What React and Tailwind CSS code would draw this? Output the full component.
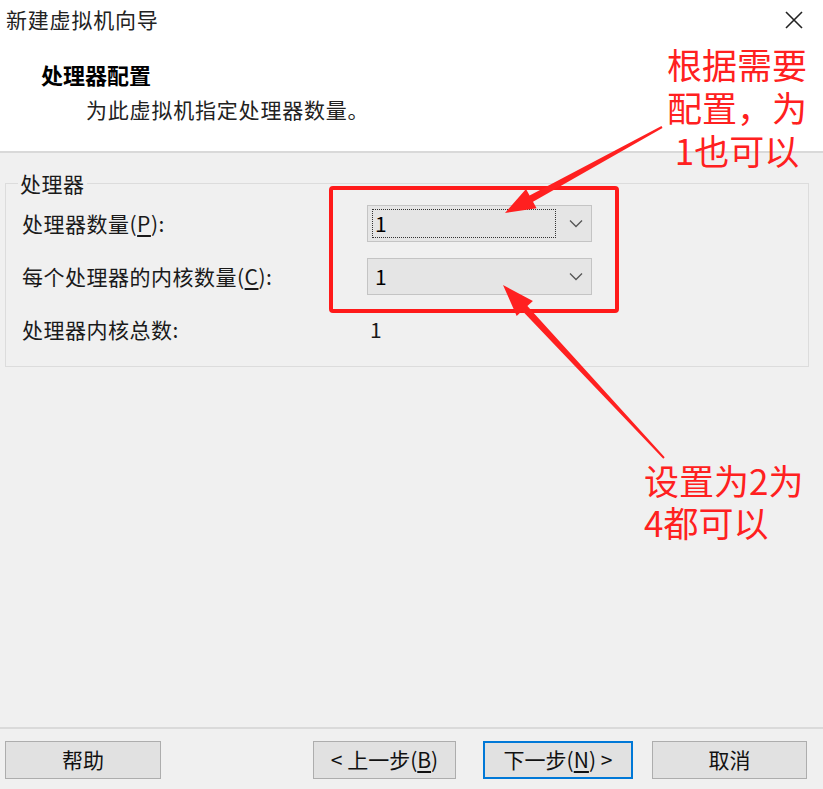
import React from 'react';

const font = { fontFamily: '"Noto Sans CJK SC", "Liberation Sans", sans-serif' };

function arrowPoints(x1, y1, x2, y2, tailW, shaftW, headLen, headW) {
  const dx = x2 - x1;
  const dy = y2 - y1;
  const len = Math.hypot(dx, dy);
  const ux = dx / len;
  const uy = dy / len;
  const nx = -uy;
  const ny = ux;
  const bx = x2 - ux * headLen;
  const by = y2 - uy * headLen;
  const pts = [
    [x1 + nx * tailW / 2, y1 + ny * tailW / 2],
    [bx + nx * shaftW / 2, by + ny * shaftW / 2],
    [bx + nx * headW / 2, by + ny * headW / 2],
    [x2, y2],
    [bx - nx * headW / 2, by - ny * headW / 2],
    [bx - nx * shaftW / 2, by - ny * shaftW / 2],
    [x1 - nx * tailW / 2, y1 - ny * tailW / 2],
  ];
  return pts.map((p) => p[0].toFixed(1) + ',' + p[1].toFixed(1)).join(' ');
}

function Chevron() {
  return (
    <svg width="14" height="9" viewBox="0 0 14 9" className="text-[#555]">
      <path d="M1 1.5 L7 7.5 L13 1.5" fill="none" stroke="currentColor" strokeWidth="1.3" />
    </svg>
  );
}

function Combo({ focused }) {
  return (
    <div className="w-[225px] h-[37px] bg-[#e5e5e5] border border-[#c4c4c4] flex items-center pl-[4px] pr-[8px]">
      <div
        className={
          'flex-1 h-[29px] flex items-center pl-[2px] text-[21px] text-black ' +
          (focused ? 'border border-dotted border-[#333]' : 'border border-transparent')
        }
      >
        1
      </div>
      <div className="ml-[13px]">
        <Chevron />
      </div>
    </div>
  );
}

function Btn({ children, primary, className }) {
  return (
    <button
      className={
        'h-[38px] flex items-center justify-center text-[21px] text-[#111] bg-[#e1e1e1] ' +
        (primary ? 'border-2 border-[#0078d7]' : 'border border-[#adadad]') +
        ' ' +
        (className || '')
      }
      style={font}
    >
      {children}
    </button>
  );
}

export default function App() {
  return (
    <div className="relative w-[823px] h-[789px] flex flex-col bg-[#f0f0f0] overflow-hidden text-[#1a1a1a]" style={font}>
      {/* title bar */}
      <div className="h-[40px] bg-white flex items-center justify-between pl-[6px] pr-[20px]">
        <span className="text-[21px] tracking-[0.8px] text-[#222]">新建虚拟机向导</span>
        <svg width="18" height="18" viewBox="0 0 18 18">
          <path d="M1 1 L17 17 M17 1 L1 17" stroke="#222" strokeWidth="1.6" />
        </svg>
      </div>

      {/* header */}
      <div className="h-[113px] bg-white border-b-2 border-[#d9d9d9] pl-[41px] pt-[18px]">
        <div className="text-[22px] font-bold leading-[32px] text-black">处理器配置</div>
        <div className="pl-[45px] text-[21px] tracking-[0.8px] leading-[32px] mt-[3px] text-[#222]">为此虚拟机指定处理器数量。</div>
      </div>

      {/* body */}
      <div className="flex-1 px-[5px] pt-[17px]">
        <fieldset className="w-[804px] h-[197px] border border-[#dcdcdc] pl-[16px] pr-[10px] pb-[10px] text-[21px] tracking-[0.5px]">
          <legend className="px-[2px] ml-[-4px] leading-[26px]">处理器</legend>
          <div className="flex items-center h-[37px] mt-[9px]">
            <span className="w-[345px]">
              处理器数量(<span className="underline underline-offset-[3px]">P</span>):
            </span>
            <Combo focused />
          </div>
          <div className="flex items-center h-[37px] mt-[16px]">
            <span className="w-[345px]">
              每个处理器的内核数量(<span className="underline underline-offset-[3px]">C</span>):
            </span>
            <Combo />
          </div>
          <div className="flex items-center h-[37px] mt-[16px]">
            <span className="w-[348px]">处理器内核总数:</span>
            <span>1</span>
          </div>
        </fieldset>
      </div>

      {/* footer */}
      <div className="h-[62px] border-t-2 border-[#dadada] flex items-center px-[5px] pt-[2px]">
        <Btn className="w-[156px]">帮助</Btn>
        <Btn className="w-[143px] ml-[152px]">
          &lt; 上一步(<span className="underline underline-offset-[3px]">B</span>)
        </Btn>
        <Btn primary className="w-[150px] ml-[27px]">
          下一步(<span className="underline underline-offset-[3px]">N</span>) &gt;
        </Btn>
        <Btn className="w-[155px] ml-[19px]">取消</Btn>
      </div>

      {/* annotations */}
      <div className="absolute left-[329px] top-[186px] w-[290px] h-[127px] border-[4px] border-[#ff1a1a] rounded-[4px]" />
      <svg className="absolute left-0 top-0 pointer-events-none" width="823" height="789">
        <polygon points={arrowPoints(662, 127, 505, 213, 2, 7, 30, 22)} fill="#ff2020" />
        <polygon points={arrowPoints(664, 458, 503, 285, 2, 7, 32, 22)} fill="#ff2020" />
      </svg>
      <div className="absolute left-[664px] top-[42px] w-[146px] text-center text-[35px] leading-[43px] text-[#ff2020]">
        根据需要<br />配置，为<br />1也可以
      </div>
      <div className="absolute left-[644px] top-[459px] text-[35px] leading-[42px] text-[#ff2020]">
        设置为2为<br />4都可以
      </div>
    </div>
  );
}
